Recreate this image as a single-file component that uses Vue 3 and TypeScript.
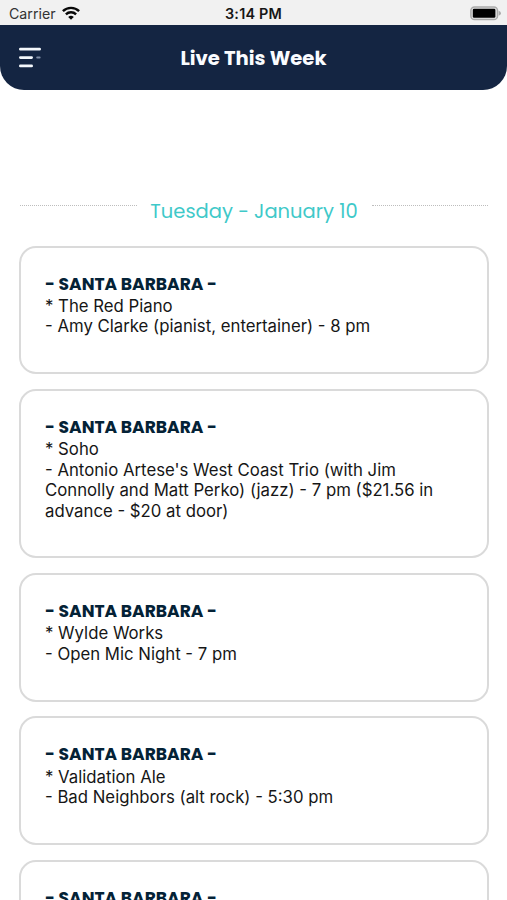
<script setup lang="ts">
interface Listing {
  id: number
  city: string
  venue: string
  act: string[]
}

const listings: Listing[] = [
  { id: 1, city: '- SANTA BARBARA -', venue: '* The Red Piano', act: ['- Amy Clarke (pianist, entertainer) - 8 pm'] },
  {
    id: 2,
    city: '- SANTA BARBARA -',
    venue: '* Soho',
    act: [
      "- Antonio Artese's West Coast Trio (with Jim",
      'Connolly and Matt Perko) (jazz) - 7 pm ($21.56 in',
      'advance - $20 at door)',
    ],
  },
  { id: 3, city: '- SANTA BARBARA -', venue: '* Wylde Works', act: ['- Open Mic Night - 7 pm'] },
  { id: 4, city: '- SANTA BARBARA -', venue: '* Validation Ale', act: ['- Bad Neighbors (alt rock) - 5:30 pm'] },
  { id: 5, city: '- SANTA BARBARA -', venue: '', act: [''] },
]
</script>

<template>
  <div class="screen">
    <div class="status">
      <div class="carrier">
        <span>Carrier</span>
        <svg class="wifi" width="18" height="14" viewBox="0 0 18 14" fill="none" stroke="#080808" stroke-width="2.4">
          <path d="M0.9 5.2C5.4 0.7 12.6 0.7 17.1 5.2" />
          <path d="M3.9 8.3C6.7 5.5 11.3 5.5 14.1 8.3" />
          <path d="M9 13.8L6.2 10.9Q9 8.5 11.8 10.9Z" fill="#080808" stroke="none" />
        </svg>
      </div>
      <span class="time">3:14 PM</span>
      <svg class="battery" width="32" height="15" viewBox="0 0 32 15">
        <rect x="0.9" y="0.9" width="26.6" height="12.7" rx="3.6" fill="#e4e4e4" stroke="#aaa" stroke-width="1.5" />
        <rect x="2.8" y="2.8" width="22.6" height="9" rx="1.3" fill="#000" />
        <path d="M28.6 4.7Q31 5.4 31 7.2Q31 9 28.6 9.8Z" fill="#aaa" />
      </svg>
    </div>

    <header class="bar">
      <svg class="menu" width="24" height="22" viewBox="0 0 24 22" fill="none" stroke="#f4f8fc" stroke-width="2.8" stroke-linecap="round">
        <path d="M2.4 2.2H21.6M2.4 10.6H13.6M2.4 18.9H13.6" />
        <path d="M19.2 10.4H21.6" stroke="#7f8da5" stroke-width="2" />
      </svg>
      <h1 class="title">Live This Week</h1>
    </header>

    <main class="content">
      <div class="day">
        <i class="rule"></i>
        <h2 class="date">Tuesday - January 10</h2>
        <i class="rule"></i>
      </div>

      <section class="cards">
        <article v-for="item in listings" :key="item.id" class="card">
          <h3 class="city">{{ item.city }}</h3>
          <p class="line">{{ item.venue }}</p>
          <p v-for="(text, i) in item.act" :key="i" class="line">{{ text }}</p>
        </article>
      </section>
    </main>
  </div>
</template>

<style>
body {
  margin: 0;
  background: #fff;
}
</style>

<style scoped>
.screen {
  height: 900px;
  overflow: hidden;
  background: #fff;
  font-family: Inter, 'Liberation Sans', sans-serif;
  color: #161616;
}
.status {
  display: grid;
  grid-template-columns: 1fr auto 1fr;
  align-items: center;
  height: 25px;
  padding: 1px 5px 0;
  box-sizing: border-box;
  background: #f1f1f1;
}
.carrier {
  display: flex;
  align-items: center;
  gap: 6px;
  padding-left: 4px;
  font-size: 14.2px;
  color: #333;
}
.time {
  font-size: 14.4px;
  font-weight: 600;
  letter-spacing: 0.2px;
}
.battery {
  justify-self: end;
}
.bar {
  display: grid;
  grid-template-columns: 60px 1fr 60px;
  align-items: center;
  height: 65px;
  background: #142542;
  border-radius: 0 0 24px 24px;
}
.menu {
  margin-left: 18px;
}
.title {
  margin: 0;
  text-align: center;
  font-family: Poppins, Inter, sans-serif;
  font-size: 19.6px;
  font-weight: 700;
  line-height: 28px;
  color: #fafcff;
}
.content {
  padding: 109px 18.5px 0 19px;
}
.day {
  display: flex;
  justify-content: space-between;
  height: 24px;
  padding: 0 0.5px 0 1px;
}
.rule {
  width: 116.5px;
  height: 0;
  margin-top: 6px;
  border-top: 1px dotted #bdbdbd;
}
.date {
  margin: 0;
  padding-top: 1px;
  font-family: Poppins, Lato, sans-serif;
  font-size: 19.5px;
  font-weight: 400;
  line-height: 24px;
  white-space: nowrap;
  color: #3fc9c9;
}
.cards {
  display: flex;
  flex-direction: column;
  gap: 14.7px;
  margin-top: 22.6px;
}
.card {
  flex: none;
  box-sizing: border-box;
  padding: 25px 24px 35.4px;
  border: 2px solid #dadada;
  border-radius: 17px;
}
.city {
  margin: 0;
  font-family: Poppins, Inter, sans-serif;
  font-size: 17.1px;
  font-weight: 700;
  line-height: 22.2px;
  padding-bottom: 1px;
  white-space: nowrap;
  color: #042236;
}
.line {
  margin: 0;
  min-height: 20.5px;
  font-size: 16.75px;
  line-height: 20.5px;
  white-space: nowrap;
}
</style>
